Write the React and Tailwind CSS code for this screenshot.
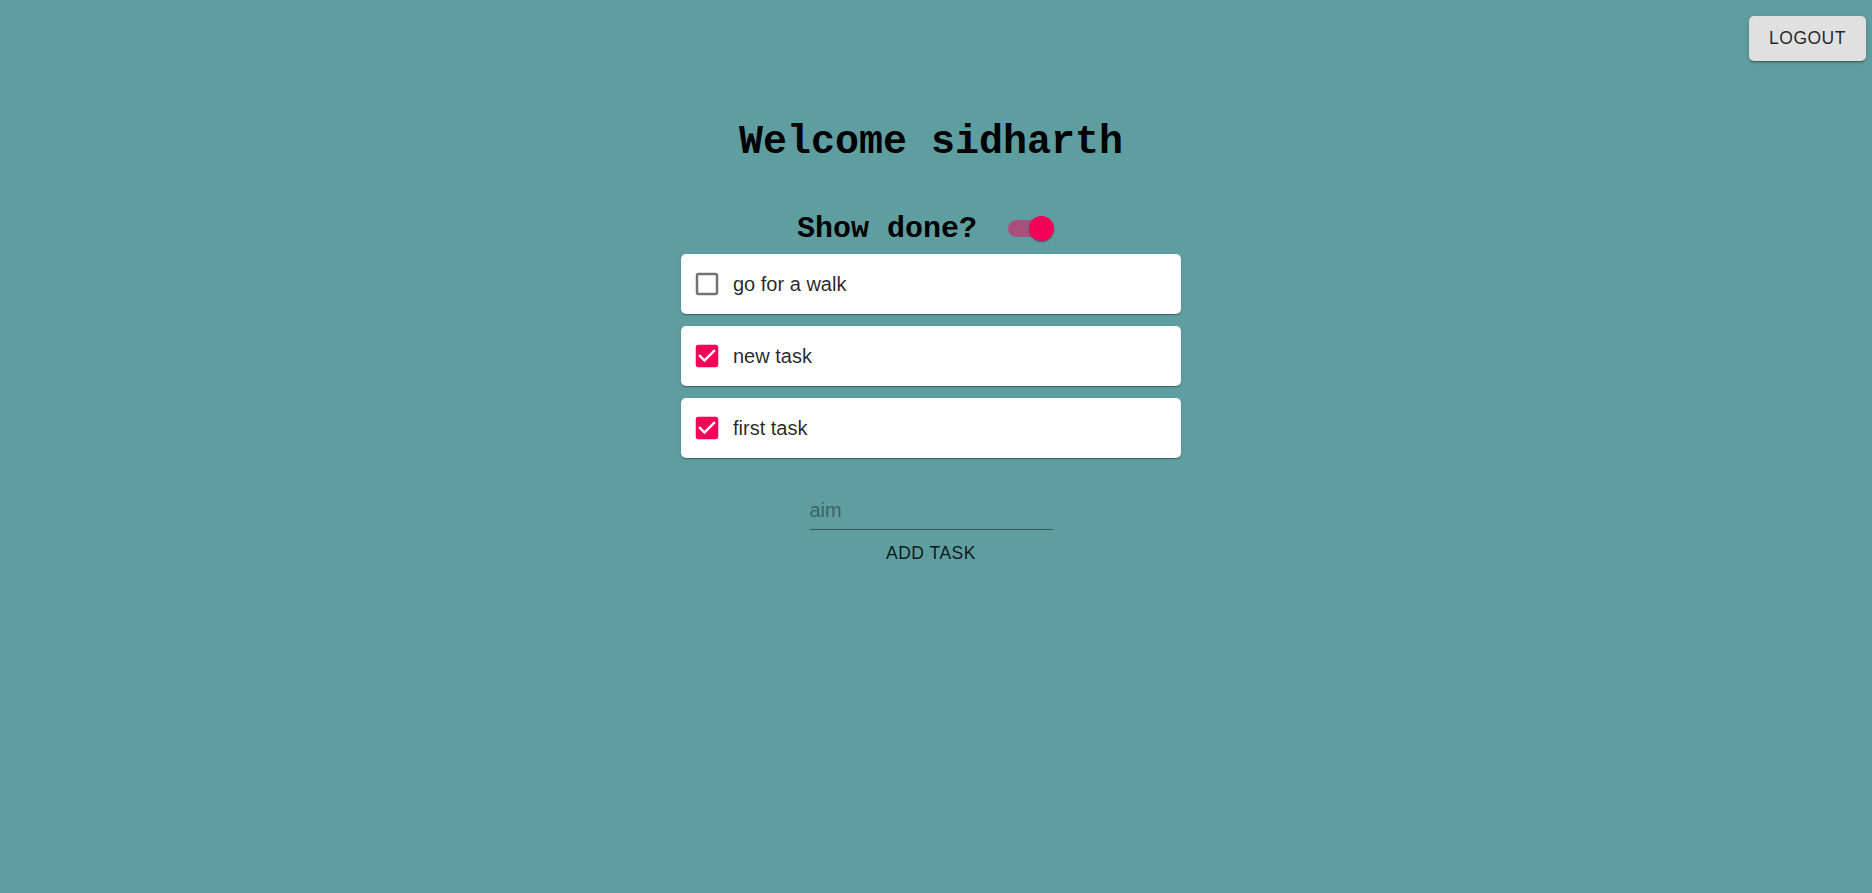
import { useState } from "react";

const CHECKED =
  "M19 3H5c-1.11 0-2 .9-2 2v14c0 1.1.89 2 2 2h14c1.11 0 2-.9 2-2V5c0-1.1-.89-2-2-2zm-9 14l-5-5 1.41-1.41L10 14.17l7.59-7.59L19 8l-9 9z";
const UNCHECKED =
  "M19 5v14H5V5h14m0-2H5c-1.1 0-2 .9-2 2v14c0 1.1.9 2 2 2h14c1.1 0 2-.9 2-2V5c0-1.1-.9-2-2-2z";

function TaskCard({ task, onToggle }) {
  return (
    <div className="w-[500px] h-[60px] bg-white rounded-[5px] shadow-[0_2px_1px_-1px_rgba(0,0,0,0.2),0_1px_1px_0_rgba(0,0,0,0.14),0_1px_3px_0_rgba(0,0,0,0.12)] flex items-center pl-[11px] gap-[11px]">
      <button type="button" onClick={onToggle} className="w-[30px] h-[30px] flex items-center justify-center">
        <svg
          viewBox="0 0 24 24"
          className={`w-[30px] h-[30px] ${task.done ? "text-[#f50057]" : "text-black/55"}`}
          fill="currentColor"
        >
          <path d={task.done ? CHECKED : UNCHECKED} />
        </svg>
      </button>
      <span className="text-[20px] leading-[24px] text-black/85">{task.title}</span>
    </div>
  );
}

export default function App() {
  const [showDone, setShowDone] = useState(true);
  const [text, setText] = useState("");
  const [tasks, setTasks] = useState([
    { id: 1, title: "go for a walk", done: false },
    { id: 2, title: "new task", done: true },
    { id: 3, title: "first task", done: true },
  ]);

  const visible = showDone ? tasks : tasks.filter((t) => !t.done);

  function addTask() {
    if (!text.trim()) return;
    setTasks([{ id: Date.now(), title: text.trim(), done: false }, ...tasks]);
    setText("");
  }

  return (
    <div className="min-h-screen bg-[#5f9ea0] font-['Liberation_Sans',Arial,sans-serif]">
      {/* Header */}
      <div className="flex justify-end pt-[16px] pr-[6px]">
        <button
          type="button"
          className="h-[45px] w-[117px] bg-[#e0e0e0] rounded-[5px] text-[17.5px] tracking-[0.5px] text-black/85 shadow-[0_3px_1px_-2px_rgba(0,0,0,0.2),0_2px_2px_0_rgba(0,0,0,0.14),0_1px_5px_0_rgba(0,0,0,0.12)]"
        >
          LOGOUT
        </button>
      </div>

      {/* Content */}
      <div className="flex flex-col items-center pr-[10px]">
        <h1 className="mt-[59px] text-[40px] leading-[45px] font-bold text-black font-['Liberation_Mono','Courier_New',monospace]">
          Welcome sidharth
        </h1>

        <div className="mt-[40px] flex items-center h-[48px]">
          <span className="text-[30px] leading-[34px] font-bold text-black font-['Liberation_Mono','Courier_New',monospace]">
            Show done?
          </span>
          <button
            type="button"
            onClick={() => setShowDone(!showDone)}
            className="relative ml-[16px] w-[72px] h-[48px]"
          >
            <span
              className={`absolute left-[15px] top-[15px] w-[42px] h-[17px] rounded-full ${
                showDone ? "bg-[#f50057]/50" : "bg-black/40"
              }`}
            />
            <span
              className={`absolute top-[11px] w-[25px] h-[25px] rounded-full shadow-[0_2px_1px_-1px_rgba(0,0,0,0.2),0_1px_1px_0_rgba(0,0,0,0.14),0_1px_3px_0_rgba(0,0,0,0.12)] ${
                showDone ? "left-[36px] bg-[#f50057]" : "left-[12px] bg-[#fafafa]"
              }`}
            />
          </button>
        </div>

        <div className="mt-[1px] flex flex-col gap-[12px]">
          {visible.map((task) => (
            <TaskCard
              key={task.id}
              task={task}
              onToggle={() =>
                setTasks(tasks.map((t) => (t.id === task.id ? { ...t, done: !t.done } : t)))
              }
            />
          ))}
        </div>

        {/* Add task */}
        <div className="mt-[34px] flex flex-col items-center">
          <input
            value={text}
            onChange={(e) => setText(e.target.value)}
            placeholder="aim"
            className="w-[243px] bg-transparent outline-none pt-[6px] pb-[7px] text-[20px] leading-[24px] text-black/85 placeholder:text-black/40 border-b border-black/45"
          />
          <button
            type="button"
            onClick={addTask}
            className="h-[46px] px-[10px] text-[17.5px] tracking-[0.5px] text-black/85"
          >
            ADD TASK
          </button>
        </div>
      </div>
    </div>
  );
}
